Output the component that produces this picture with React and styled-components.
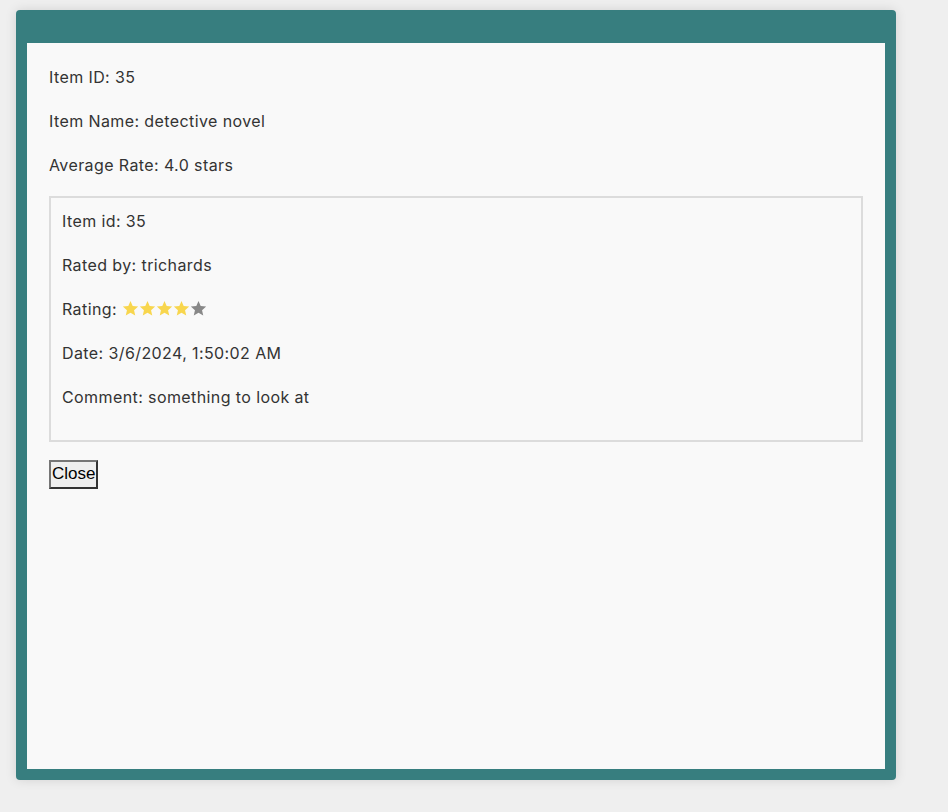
import React from "react";
import styled, { createGlobalStyle } from "styled-components";

const Global = createGlobalStyle`
  html, body { margin: 0; padding: 0; background: #efefef; }
  body { font-family: Inter, "Noto Sans", sans-serif; }
`;

const Page = styled.div`
  padding: 10px 0 0 16px;
  height: 802px;
  box-sizing: border-box;
`;

const Modal = styled.div`
  width: 880px;
  height: 770px;
  box-sizing: border-box;
  background: #377e7f;
  border-radius: 4px;
  padding: 33px 11px 11px 11px;
  box-shadow: 0 0 12px rgba(0, 0, 0, 0.12);
  display: flex;
`;

const Body = styled.div`
  flex: 1;
  background: #f9f9f9;
  padding: 22px 22px;
  color: #333;
  font-size: 16px;
  letter-spacing: 0.4px;
`;

const Line = styled.p`
  margin: 0 0 20px 0;
  line-height: 24px;
`;

const ReviewBox = styled.div`
  border: 2px solid #dcdcdc;
  padding: 11px 11px 11px 11px;
  margin: -1px 0 18px 0;
`;

const Stars = styled.span`
  display: inline-flex;
  vertical-align: -2px;
`;

const Star = styled.svg`
  width: 17px;
  height: 17px;
  fill: ${(p) => (p.$on ? "#f8d64e" : "#888")};
`;

const CloseButton = styled.button`
  font-family: "Liberation Sans", Arial, sans-serif;
  font-size: 17px;
  letter-spacing: 0;
  padding: 2px 1px 3px;
  background: #efefef;
  color: #000;
  border: 2px solid;
  border-color: #767676 #333 #333 #767676;
  line-height: 20px;
  cursor: pointer;
`;

const StarIcon = ({ on }) => (
  <Star $on={on} viewBox="0 0 24 24">
    <path d="M12 1.5l3.1 7.1 7.7.7-5.8 5.1 1.7 7.6L12 18.1l-6.7 3.9 1.7-7.6-5.8-5.1 7.7-.7z" />
  </Star>
);

export default function App() {
  const rating = 4;
  return (
    <>
      <Global />
      <Page>
        <Modal>
          <Body>
            <Line>Item ID: 35</Line>
            <Line>Item Name: detective novel</Line>
            <Line>Average Rate: 4.0 stars</Line>
            <ReviewBox>
              <Line>Item id: 35</Line>
              <Line>Rated by: trichards</Line>
              <Line>
                Rating:{" "}
                <Stars>
                  {[1, 2, 3, 4, 5].map((n) => (
                    <StarIcon key={n} on={n <= rating} />
                  ))}
                </Stars>
              </Line>
              <Line>Date: 3/6/2024, 1:50:02 AM</Line>
              <Line>Comment: something to look at</Line>
            </ReviewBox>
            <CloseButton>Close</CloseButton>
          </Body>
        </Modal>
      </Page>
    </>
  );
}
